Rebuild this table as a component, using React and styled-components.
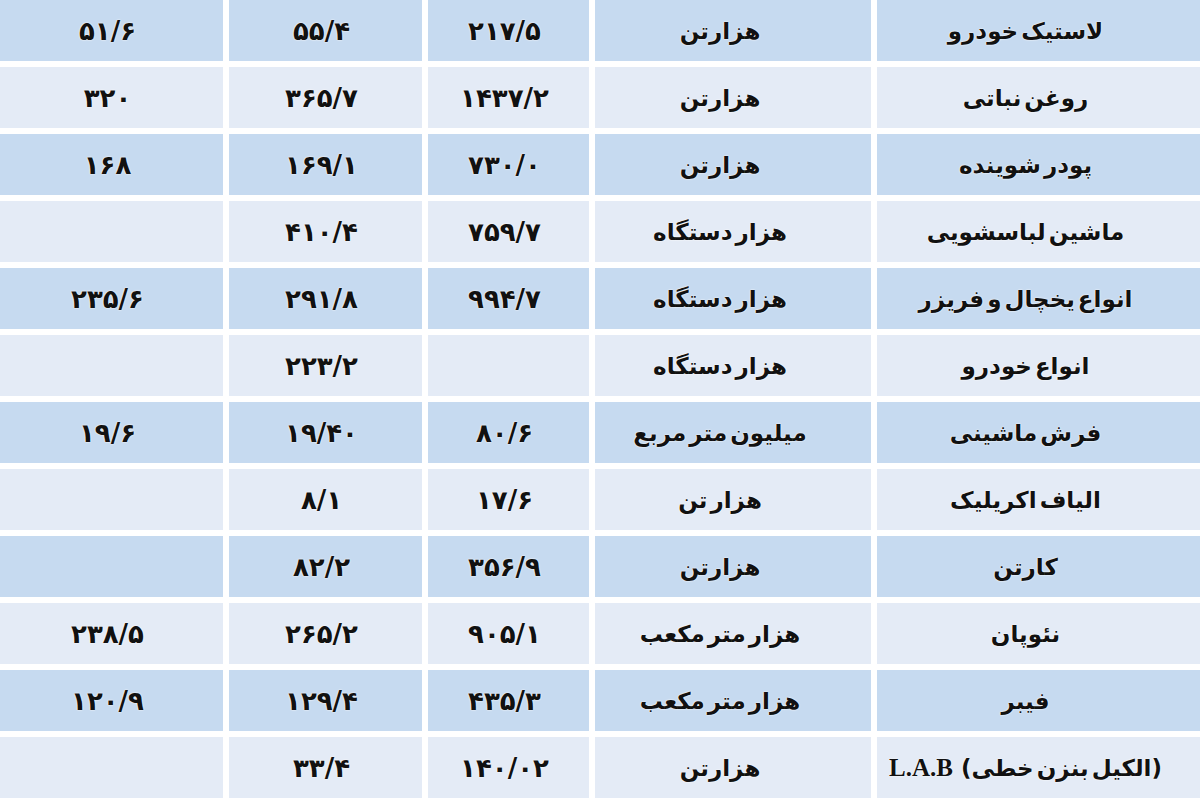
import React from "react";
import styled, { createGlobalStyle } from "styled-components";

const GlobalStyle = createGlobalStyle`
  html, body {
    margin: 0;
    padding: 0;
    background: #ffffff;
  }
`;

const rows = [
  ["لاستیک خودرو", "هزارتن", "۲۱۷/۵", "۵۵/۴", "۵۱/۶"],
  ["روغن نباتی", "هزارتن", "۱۴۳۷/۲", "۳۶۵/۷", "۳۲۰"],
  ["پودر شوینده", "هزارتن", "۷۳۰/۰", "۱۶۹/۱", "۱۶۸"],
  ["ماشین لباسشویی", "هزار دستگاه", "۷۵۹/۷", "۴۱۰/۴", ""],
  ["انواع یخچال و فریزر", "هزار دستگاه", "۹۹۴/۷", "۲۹۱/۸", "۲۳۵/۶"],
  ["انواع خودرو", "هزار دستگاه", "", "۲۲۳/۲", ""],
  ["فرش ماشینی", "میلیون متر مربع", "۸۰/۶", "۱۹/۴۰", "۱۹/۶"],
  ["الیاف اکریلیک", "هزار تن", "۱۷/۶", "۸/۱", ""],
  ["کارتن", "هزارتن", "۳۵۶/۹", "۸۲/۲", ""],
  ["نئوپان", "هزار متر مکعب", "۹۰۵/۱", "۲۶۵/۲", "۲۳۸/۵"],
  ["فیبر", "هزار متر مکعب", "۴۳۵/۳", "۱۲۹/۴", "۱۲۰/۹"],
  [null, "هزارتن", "۱۴۰/۰۲", "۳۳/۴", ""]
];

const Page = styled.div`
  width: 1200px;
  height: 800px;
  overflow: hidden;
  background: #ffffff;
  direction: rtl;
`;

const Table = styled.div`
  display: flex;
  flex-direction: column;
  gap: 6px;
`;

const Row = styled.div`
  display: grid;
  grid-template-columns: 323px 276px 161px 193px 223px;
  column-gap: 6px;
  height: 61px;
`;

const Cell = styled.div`
  display: flex;
  align-items: center;
  justify-content: center;
  padding-right: ${p => (p.$label ? "26px" : "8px")};
  background: ${p => (p.$dark ? "#c6daf0" : "#e4ebf6")};
  color: #111111;
  font-family: "DejaVu Sans", "Noto Sans", sans-serif;
  font-weight: bold;
  font-size: ${p => (p.$label ? "23px" : "26px")};
  letter-spacing: ${p => (p.$label ? "-0.5px" : "1px")};
  word-spacing: ${p => (p.$label ? "-5px" : "0")};
  text-shadow: 0 0 2px #ffffff, 0 0 1px #ffffff;
  white-space: nowrap;
`;

const Latin = styled.span`
  font-family: "Liberation Serif", serif;
  font-weight: bold;
  font-size: 25px;
  letter-spacing: 0;
  margin-right: 8px;
`;

const App = () => {
  return (
    <>
      <GlobalStyle />
      <Page>
        <Table>
          {rows.map((row, i) => (
            <Row key={i}>
              {row.map((value, j) => (
                <Cell key={j} $dark={i % 2 === 0} $label={j < 2}>
                  {value === null ? (
                    <>
                      <span>(الکیل بنزن خطی)</span>
                      <Latin>L.A.B</Latin>
                    </>
                  ) : (
                    value
                  )}
                </Cell>
              ))}
            </Row>
          ))}
        </Table>
      </Page>
    </>
  );
};

export default App;
